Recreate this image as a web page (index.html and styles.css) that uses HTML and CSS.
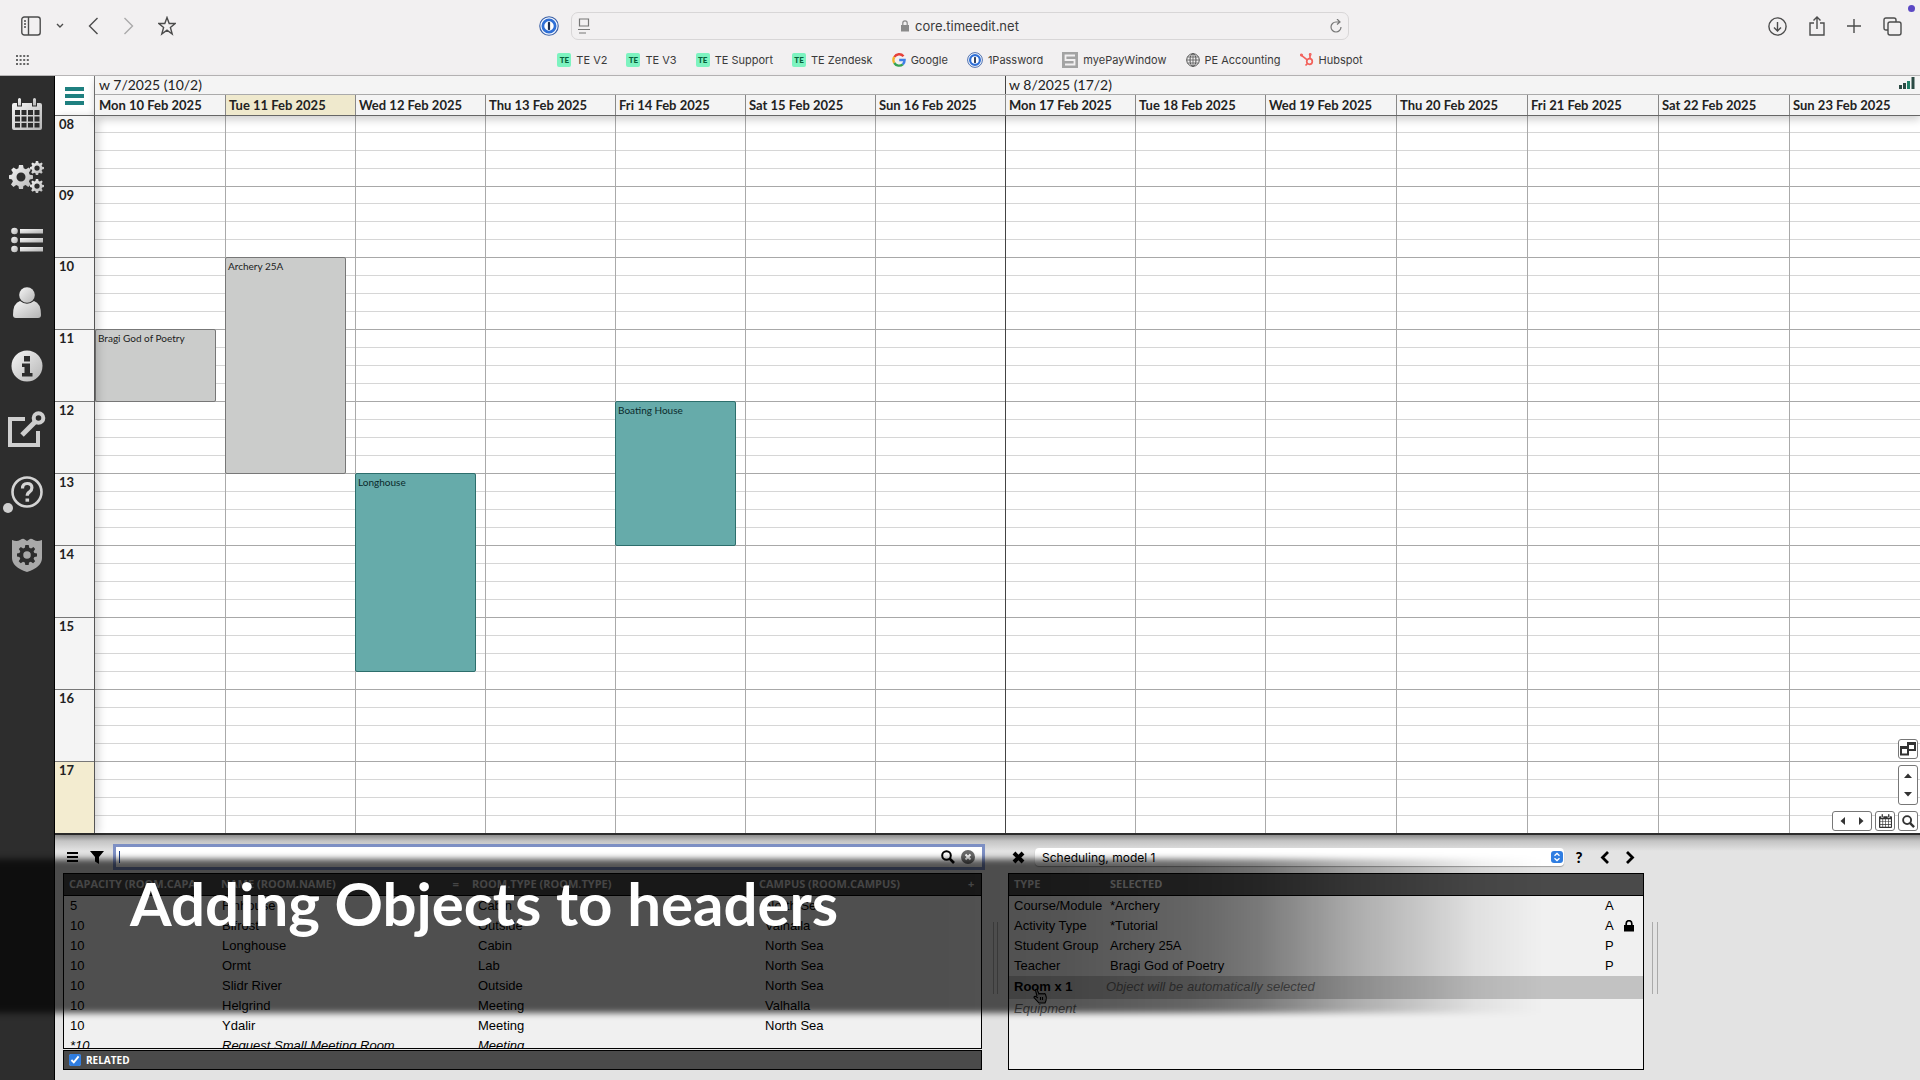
FILE: index.html
```
<!DOCTYPE html>
<html lang="en">
<head>
<meta charset="utf-8">
<title>core.timeedit.net</title>
<link rel="stylesheet" href="styles.css">
</head>
<body>
<svg class="defs" aria-hidden="true">
  <defs>
    <linearGradient id="metal" x1="0" y1="0" x2="1" y2="1">
      <stop offset="0" stop-color="#f6f6f6"/><stop offset="1" stop-color="#b4b4b4"/>
    </linearGradient>
    <symbol id="gear" viewBox="0 0 24 24">
      <path fill-rule="evenodd" d="M10 0h4l.7 3.3 2.2.9L19.800 2.400l2 2.400-1.900 2.900.9 2L24 10.200v3.600l-3.200.7-.9 2.100 1.900 2.800-2.500 2.500-2.700-1.900-2.200.9L14 24h-4l-.6-3.100-2.200-.9-2.700 1.900L2 19.400l1.900-2.800-.9-2.100L0 13.800v-3.600l3-.6.9-2L2.200 4.800l2.400-2.400 2.700 1.800 2.100-.9zM12 7.500a4.500 4.500 0 1 0 0 9 4.500 4.500 0 1 0 0-9z"/>
    </symbol>
    <symbol id="cal" viewBox="0 0 30 32">
      <path d="M0 7q0-2 2-2h3v3.500h5V5h10v3.500h5V5h3q2 0 2 2v23q0 2-2 2H2q-2 0-2-2z"/>
      <path d="M6 1.500Q6 0 7.500 0T9 1.500V7.500H6zM21 1.500Q21 0 22.500 0T24 1.500V7.500h-3z"/>
      <path class="holes" d="M3 12h5v5H3zM9.500 12h5v5h-5zM16 12h5v5h-5zM22.500 12h5v5h-5zM3 18.500h5v5H3zM9.500 18.500h5v5h-5zM16 18.500h5v5h-5zM22.500 18.500h5v5h-5zM3 25h5v4.500H3zM9.500 25h5v4.500h-5zM16 25h5v4.500h-5zM22.500 25h5v4.500h-5z"/>
    </symbol>
    <symbol id="onepass" viewBox="0 0 18 18">
      <circle cx="9" cy="9" r="8.300" fill="#f4f7fd" stroke="#3a5fa5"/>
      <circle cx="9" cy="9" r="5.500" fill="#fff" stroke="#2f6fd6" stroke-width="2.500"/>
      <rect x="8" y="5.500" width="2" height="7" rx=".6" fill="#1c2c4c"/>
    </symbol>
    <symbol id="lens" viewBox="0 0 14 14">
      <circle cx="5.500" cy="5.500" r="4.300" fill="none" stroke="currentColor" stroke-width="2"/>
      <path d="M8.500 8.500L13 13" stroke="currentColor" stroke-width="2.600"/>
    </symbol>
  </defs>
</svg>

<header class="browser">
  <div class="bar">
    <div class="bar-left">
      <button class="ic" aria-label="Sidebar"><svg width="20" height="20" viewBox="0 0 20 20"><rect x=".8" y="1" width="18.400" height="18" rx="2.500"/><path d="M7.500 1v18M3 5h2M3 8h2M3 11h2"/></svg></button>
      <button class="ic menu-caret" aria-label="Tab groups"><svg width="8" height="6" viewBox="0 0 8 6"><path d="M1 1l3 3 3-3"/></svg></button>
      <button class="ic back" aria-label="Back"><svg width="11" height="18" viewBox="0 0 11 18"><path d="M9.500 1L1.500 9l8 8"/></svg></button>
      <button class="ic forward" aria-label="Forward"><svg width="11" height="18" viewBox="0 0 11 18"><path d="M1.500 1l8 8-8 8"/></svg></button>
      <button class="ic" aria-label="Favourites"><svg width="18" height="20" viewBox="0 0 18 20"><path d="M9 1.500l2.200 6h6l-4.800 4 1.800 6.500L9 14.200 3.800 18l1.800-6.500-4.800-4h6z"/></svg></button>
    </div>
    <div class="bar-mid">
      <svg width="20" height="20"><use href="#onepass"/></svg>
      <div class="address">
        <svg class="line" width="12" height="16" viewBox="0 0 12 16"><path d="M1.500 1h9v7h-9zM0 11.500h12M1 15h7"/></svg>
        <span class="host"><svg width="8" height="12" viewBox="0 0 8 12"><path d="M0 5h8v6.500H0z" fill="#8a8a8a"/><path d="M1.800 5V3a2.200 2.200 0 0 1 4.400 0v2" fill="none" stroke="#8a8a8a" stroke-width="1.200"/></svg>core.timeedit.net</span>
        <svg class="line" width="12" height="14" viewBox="0 0 12 14"><path d="M7 0l3 3-3 2.500M9.500 3H6a5 5 0 1 0 5 5"/></svg>
      </div>
    </div>
    <div class="bar-right">
      <button class="ic" aria-label="Downloads"><svg width="19" height="19" viewBox="0 0 19 19"><circle cx="9.500" cy="9.500" r="8.600"/><path d="M9.500 5v8.500M6 10.500l3.500 3.500 3.500-3.500"/></svg></button>
      <button class="ic" aria-label="Share"><svg width="16" height="20" viewBox="0 0 16 20"><path d="M5 7H1v12h14V7h-4M8 13V1M4.500 4.500L8 1l3.500 3.500"/></svg></button>
      <button class="ic" aria-label="New tab"><svg width="14" height="14" viewBox="0 0 14 14"><path d="M7 0v14M0 7h14"/></svg></button>
      <button class="ic" aria-label="Tab overview"><svg width="19" height="19" viewBox="0 0 19 19"><rect x="5" y="5" width="13" height="13" rx="2"/><path d="M5 13H3q-2 0-2-2V3q0-2 2-2h8q2 0 2 2v2"/></svg></button>
    </div>
    <span class="rec-dot"></span>
  </div>
  <nav class="bookmarks">
    <svg class="dots" width="13" height="10" viewBox="0 0 13 10"><path d="M0 1h13M0 5h13M0 9h13" stroke="#666" stroke-width="2" stroke-dasharray="2 1.600"/></svg>
    <a href="#"><span class="te">TE</span>TE V2</a>
    <a href="#"><span class="te">TE</span>TE V3</a>
    <a href="#"><span class="te">TE</span>TE Support</a>
    <a href="#"><span class="te">TE</span>TE Zendesk</a>
    <a href="#"><svg width="14" height="14" viewBox="0 0 14 14" fill="none" stroke-width="2.400"><path d="M11.500 3.200A5.700 5.700 0 0 0 2.300 4" stroke="#e5403a"/><path d="M2.300 4a5.700 5.700 0 0 0 0 6" stroke="#f2b32c"/><path d="M2.300 10a5.700 5.700 0 0 0 8.500 1.300" stroke="#35a353"/><path d="M10.800 11.300A5.700 5.700 0 0 0 12.600 7H7.200" stroke="#3f7fe8"/></svg>Google</a>
    <a href="#"><svg width="16" height="16"><use href="#onepass"/></svg>1Password</a>
    <a href="#"><svg width="16" height="16" viewBox="0 0 16 16"><rect width="16" height="16" fill="#a3a3a3"/><path d="M13 3.500H3.500v4.500h9v4.500H3" fill="none" stroke="#f2f0f1" stroke-width="1.800"/></svg>myePayWindow</a>
    <a href="#"><svg width="14" height="14" viewBox="0 0 14 14" fill="none" stroke="#555"><circle cx="7" cy="7" r="6.300"/><ellipse cx="7" cy="7" rx="3" ry="6.300"/><path d="M7 .7v12.600M.7 7h12.600M1.500 4h11M1.500 10h11" stroke-width=".8"/></svg>PE Accounting</a>
    <a href="#"><svg width="14" height="14" viewBox="0 0 14 14" fill="none" stroke="#f2605a" stroke-width="1.700"><circle cx="9.500" cy="8.500" r="2.800"/><path d="M10 5.500V1.500M7.200 6.800L1.500 2.300M7.500 10.500L5.500 12.500"/><circle cx="1.500" cy="2" r=".7"/><circle cx="10.200" cy="1.500" r=".6"/></svg>Hubspot</a>
  </nav>
</header>

<div class="app">
  <nav class="side">
    <a href="#" aria-label="Calendar"><svg width="30" height="32" fill="url(#metal)"><use href="#cal"/></svg></a>
    <a href="#" aria-label="Settings"><svg width="36" height="32" viewBox="0 0 36 32" fill="url(#metal)"><use href="#gear" x="0" y="4" width="24" height="24"/><use href="#gear" x="21" y="0" width="14" height="14"/><use href="#gear" x="21" y="18" width="14" height="14"/></svg></a>
    <a href="#" aria-label="List"><svg width="32" height="26" viewBox="0 0 32 26" fill="url(#metal)"><circle cx="3.500" cy="4" r="3.300"/><circle cx="3.500" cy="13" r="3.300"/><circle cx="3.500" cy="22" r="3.300"/><rect x="9" y="2" width="23" height="4.500"/><rect x="9" y="11" width="23" height="4.500"/><rect x="9" y="20" width="23" height="4.500"/></svg></a>
    <a href="#" aria-label="User"><svg width="30" height="32" viewBox="0 0 30 32" fill="url(#metal)"><circle cx="15" cy="8" r="7.800"/><path d="M8 14q7 5.500 14 0 7 2 7 14 0 3-3 3H4q-3 0-3-3 0-12 7-14z"/></svg></a>
    <a href="#" aria-label="Information"><svg width="32" height="32" viewBox="0 0 32 32"><circle cx="16" cy="16" r="15.500" fill="url(#metal)"/><path d="M13 6h6v5.500h-6zM11 13.500h8V23h2.500v3.500H11V23h2.500v-6H11z" fill="#2d2d2d"/></svg></a>
    <a href="#" aria-label="Open"><svg width="38" height="36" viewBox="0 0 38 36" fill="none" stroke="#cfcfcf"><path d="M17 8H2v26h28V20" stroke-width="4"/><path d="M14 24L28 10" stroke-width="5"/><circle cx="30.500" cy="7" r="4.800" stroke-width="4"/></svg></a>
    <a href="#" aria-label="Help" class="help"><svg width="32" height="32" viewBox="0 0 32 32" fill="none" stroke="#d4d4d4"><circle cx="16" cy="16" r="14.500" stroke-width="2.600"/><path d="M11.500 12.500q0-5 4.700-5t4.700 4.300q0 2.500-2.300 4-2.400 1.500-2.400 4" stroke-width="3.200"/><path d="M14.500 22.500h3.600v3.200h-3.600z" fill="#d4d4d4" stroke="none"/></svg></a>
    <a href="#" aria-label="Admin"><svg width="30" height="34" viewBox="0 0 30 34"><path d="M0 2q5 2 8 0 3-2 4-1l3 2 3-2q1-1 4 1 3 2 8 0v18q0 9-15 14Q0 29 0 20z" fill="#a9a9a9"/><use href="#gear" x="5" y="7" width="20" height="20" fill="#2d2d2d"/></svg></a>
  </nav>

  <div class="work">
    <section class="calendar">
      <button class="menu" aria-label="Menu"><i></i><i></i><i></i></button>
      <div class="heads">
        <div class="weeks"><span>w 7/2025 (10/2)</span><span>w 8/2025 (17/2)</span>
          <svg class="stats" width="16" height="12" viewBox="0 0 16 12"><path d="M0 8h3v4H0zM4 6h3v6H4zM12.500 0h3v12h-3z" fill="#2b4a44"/><path d="M8 4h3v8H8z" fill="#1f8068"/></svg>
        </div>
        <div class="days">
          <span>Mon 10 Feb 2025</span><span class="today">Tue 11 Feb 2025</span><span>Wed 12 Feb 2025</span><span>Thu 13 Feb 2025</span><span>Fri 14 Feb 2025</span><span>Sat 15 Feb 2025</span><span>Sun 16 Feb 2025</span><span class="monday">Mon 17 Feb 2025</span><span>Tue 18 Feb 2025</span><span>Wed 19 Feb 2025</span><span>Thu 20 Feb 2025</span><span>Fri 21 Feb 2025</span><span>Sat 22 Feb 2025</span><span>Sun 23 Feb 2025</span>
        </div>
      </div>
      <div class="hours">
        <span>08</span><span>09</span><span>10</span><span>11</span><span>12</span><span>13</span><span>14</span><span>15</span><span>16</span><span class="now">17</span>
      </div>
      <div class="field">
        <div class="lines"><i></i><i></i><i></i><i></i><i></i><i></i><i></i><i></i><i></i><i></i></div>
        <div class="cols"><i></i><i></i><i></i><i></i><i></i><i></i><i></i><i class="monday"></i><i></i><i></i><i></i><i></i><i></i><i></i></div>
        <div class="events">
          <div class="event bragi">Bragi God of Poetry</div>
          <div class="event archery">Archery 25A</div>
          <div class="event room longhouse">Longhouse</div>
          <div class="event room boating">Boating House</div>
        </div>
        <div class="controls">
          <button aria-label="Windows"><svg width="16" height="14" viewBox="0 0 16 14" fill="none" stroke="#333" stroke-width="2"><path d="M8 1h7v7H8z"/><path d="M1 5h7v7.500H1z" fill="#fff"/><path d="M1 6h7M8 2h7"/></svg></button>
          <button class="tall" aria-label="Up and down"><svg width="8" height="24" viewBox="0 0 8 24" fill="#333"><path d="M0 5l4-4.500L8 5zM0 19l4 4.500L8 19z"/></svg></button>
          <div class="controls-row">
            <button class="wide" aria-label="Left and right"><svg width="24" height="8" viewBox="0 0 24 8" fill="#333"><path d="M5 0L.5 4 5 8zM19 0l4.500 4L19 8z"/></svg></button>
            <button class="dark-cal" aria-label="Pick a date"><svg width="13" height="14" fill="#333"><use href="#cal"/></svg></button>
            <button aria-label="Zoom"><svg width="13" height="13"><use href="#lens"/></svg></button>
          </div>
        </div>
      </div>
    </section>

    <section class="panels">
      <div class="panel">
        <div class="tools">
          <button class="plain" aria-label="List menu"><svg width="11" height="10" viewBox="0 0 11 10"><path d="M0 1h11M0 5h11M0 9h11" stroke="#000" stroke-width="2"/></svg></button>
          <button class="plain filter" aria-label="Filter"><svg width="14" height="13" viewBox="0 0 14 13"><path d="M0 0h14L9 6v7l-4-2.500V6z"/></svg></button>
          <div class="search">
            <input type="text" aria-label="Search">
            <span class="caret"></span>
            <svg width="14" height="14"><use href="#lens"/></svg>
            <svg width="14" height="14" viewBox="0 0 14 14"><circle cx="7" cy="7" r="7" fill="#6a6a6a"/><path d="M4.500 4.500l5 5M9.500 4.500l-5 5" stroke="#fff" stroke-width="2"/></svg>
          </div>
        </div>
        <div class="box rooms">
          <table>
            <colgroup><col class="c-cap"><col class="c-name"><col class="c-type"><col><col class="c-plus"></colgroup>
            <thead><tr><th>CAPACITY (ROOM.CAPA</th><th>NAME (ROOM.NAME)<b class="sort">=</b></th><th>ROOM.TYPE (ROOM.TYPE)</th><th>CAMPUS (ROOM.CAMPUS)</th><th>+</th></tr></thead>
            <tbody>
              <tr><td>5</td><td>Finhouse</td><td>Cabin</td><td colspan="2">North Sea</td></tr>
              <tr><td>10</td><td>Bifrost</td><td>Outside</td><td colspan="2">Valhalla</td></tr>
              <tr><td>10</td><td>Longhouse</td><td>Cabin</td><td colspan="2">North Sea</td></tr>
              <tr><td>10</td><td>Ormt</td><td>Lab</td><td colspan="2">North Sea</td></tr>
              <tr><td>10</td><td>Slidr River</td><td>Outside</td><td colspan="2">North Sea</td></tr>
              <tr><td>10</td><td>Helgrind</td><td>Meeting</td><td colspan="2">Valhalla</td></tr>
              <tr><td>10</td><td>Ydalir</td><td>Meeting</td><td colspan="2">North Sea</td></tr>
              <tr class="virtual"><td>*10</td><td>Request Small Meeting Room</td><td>Meeting</td><td colspan="2"></td></tr>
            </tbody>
          </table>
        </div>
        <label class="related"><input type="checkbox" checked>RELATED</label>
      </div>
      <div class="grip"></div>
      <div class="panel">
        <div class="tools">
          <button class="plain" aria-label="Close"><svg width="13" height="13" viewBox="0 0 13 13"><path d="M2 2l9 9M11 2l-9 9" stroke="#000" stroke-width="4"/></svg></button>
          <div class="pick">
            <select aria-label="Model"><option>Scheduling, model 1</option></select>
            <svg width="12" height="12" viewBox="0 0 12 12"><rect width="12" height="12" rx="3" fill="#2f7de1"/><path d="M3.500 4.800L6 2.500l2.500 2.300M3.500 7.200L6 9.500l2.500-2.300" fill="none" stroke="#fff" stroke-width="1.300"/></svg>
          </div>
          <button class="plain ask" aria-label="Help">?</button>
          <button class="plain" aria-label="Previous"><svg width="9" height="13" viewBox="0 0 9 13"><path d="M8 1L2.500 6.500 8 12" fill="none" stroke="#000" stroke-width="2.800"/></svg></button>
          <button class="plain next" aria-label="Next"><svg width="9" height="13" viewBox="0 0 9 13"><path d="M1 1l5.500 5.500L1 12" fill="none" stroke="#000" stroke-width="2.800"/></svg></button>
        </div>
        <div class="box picked">
          <table>
            <colgroup><col class="p-type"><col><col class="p-mode"><col class="p-lock"></colgroup>
            <thead><tr><th>TYPE</th><th>SELECTED</th><th></th><th></th></tr></thead>
            <tbody>
              <tr><td>Course/Module</td><td>*Archery</td><td>A</td><td></td></tr>
              <tr><td>Activity Type</td><td>*Tutorial</td><td>A</td><td><svg width="10" height="12" viewBox="0 0 10 12"><path d="M0 5h10v6.500H0z"/><path d="M2.200 5.500V3.500a2.800 2.800 0 0 1 5.600 0v2" fill="none" stroke="#000" stroke-width="1.700"/></svg></td></tr>
              <tr><td>Student Group</td><td>Archery 25A</td><td>P</td><td></td></tr>
              <tr><td>Teacher</td><td>Bragi God of Poetry</td><td>P</td><td></td></tr>
              <tr class="current"><td><b>Room x 1</b><svg class="hand" width="15" height="16" viewBox="0 0 15 16"><path d="M4 8L2.500 2.500q0-1.500 1.500-1L6 6q1-1 2 0 1-1 2 0 1.500-1 2.500.5 1.500 3 .5 6L12 15H6L1 9.500q0-1.500 2-1l2 1.500M7.500 9v3M9.500 9v3" fill="#aaa" stroke="#000" stroke-width="1.100"/></svg></td><td class="auto">Object will be automatically selected</td><td></td><td></td></tr>
              <tr class="unused"><td>Equipment</td><td></td><td></td><td></td></tr>
            </tbody>
          </table>
        </div>
      </div>
      <div class="grip grip-end"></div>
    </section>
  </div>

  <div class="caption"><div class="caption-shade"></div><h1>Adding Objects to headers</h1></div>
</div>
</body>
</html>
```

FILE: styles.css
```
* { box-sizing: border-box; }
body {
  margin: 0;
  min-height: 100vh;
  display: flex;
  flex-direction: column;
  font-family: Lato, "Noto Sans", sans-serif;
  color: #222;
  background: #e3e3e3;
  overflow: hidden;
}
button { border: 0; padding: 0; margin: 0; background: none; display: flex; align-items: center; justify-content: center; }
a { color: inherit; text-decoration: none; }
.defs { position: absolute; width: 0; height: 0; }
.holes { fill: var(--hole); }

/* browser chrome */
.browser { background: #f2f0f1; border-bottom: 1px solid #b8b6b7; padding-bottom: 1px; font-family: Inter, sans-serif; color: #3a3a3a; }
.bar { position: relative; display: grid; grid-template-columns: 539fr 810fr 571fr; align-items: center; height: 45px; padding-top: 7px; }
.bar-left { display: flex; align-items: center; padding-left: 21px; }
.bar-right { display: flex; align-items: center; justify-content: flex-end; gap: 22px; padding-right: 18px; }
.ic svg { display: block; fill: none; stroke: #4c4c4c; stroke-width: 1.400; }
.menu-caret { margin: 0 24px 0 15px; }
.forward { margin: 0 24px 0 24px; }
.forward svg { stroke: #aaa; }
.bar-mid { display: flex; align-items: center; gap: 12px; }
.address { flex: 1; display: flex; align-items: center; justify-content: space-between; height: 28px; padding: 0 6px; border: 1px solid #d8d6d7; border-radius: 7px; font-size: 13px; }
.line { fill: none; stroke: #777; stroke-width: 1.200; }
.host { display: flex; align-items: center; gap: 6px; }
.rec-dot { position: absolute; top: 5px; right: 5px; width: 7px; height: 7px; border-radius: 50%; background: #5b48c4; }
.bookmarks { position: relative; display: flex; justify-content: center; align-items: center; gap: 19px; height: 29px; font-size: 11px; }
.bookmarks a { display: flex; align-items: center; gap: 5px; }
.bookmarks .dots { position: absolute; left: 16px; }
.te { width: 14px; height: 14px; background: #7df3c0; color: #05603a; font: 900 8px/14px Lato, sans-serif; text-align: center; border-radius: 2px; }

/* application frame */
.app { position: relative; flex: 1; display: flex; }
.side { width: 55px; background: #2d2d2d; border-right: 1px solid #000; padding-top: 6px; display: flex; flex-direction: column; --hole: #2d2d2d; }
.side a { position: relative; display: flex; align-items: center; justify-content: center; height: 63px; }
.help::after { content: ""; position: absolute; left: 3px; bottom: 10px; width: 10px; height: 10px; border-radius: 50%; background: #cfcfcf; }
.work { flex: 1; min-width: 0; display: flex; flex-direction: column; }

/* calendar */
.calendar { display: grid; grid-template: auto auto / 40px 1fr; background: #fff; border-bottom: 2px solid #2c2c2c; }
.menu { flex-direction: column; gap: 3px; background: #fff; border-bottom: 1px solid #666; border-right: 1px solid #777; }
.menu i { width: 19px; height: 4px; background: #1f8080; }
.heads { position: relative; z-index: 2; background: #f4f4f4; box-shadow: 0 4px 8px rgba(0,0,0,.18); border-bottom: 1px solid #666; }
.weeks { position: relative; display: grid; grid-template-columns: 910fr 915fr; height: 18px; font-size: 14px; line-height: 18px; }
.weeks span { padding-left: 4px; }
.weeks span + span { border-left: 1px solid #444; padding-left: 3px; }
.stats { position: absolute; right: 5px; top: 1px; }
.days, .cols, .events { display: grid; grid-template-columns: repeat(9, minmax(0, 130fr)) repeat(5, minmax(0, 131fr)); }
.days { height: 21px; border-top: 1px solid #aaa; font-size: 13px; font-weight: 700; line-height: 21px; }
.days span { border-left: 1px solid #888; padding-left: 3px; white-space: nowrap; overflow: hidden; }
.days span:first-child { border-left: 0; padding-left: 4px; }
.days .today { background: #efe9cd; }
.hours { border-right: 1px solid #555; background: #f4f4f4; position: relative; z-index: 1; box-shadow: 4px 0 8px rgba(0,0,0,.15); }
.hours span { display: block; height: 72px; padding: 0 4px; border-top: 1px solid #777; font-size: 13px; font-weight: 700; line-height: 16px; }
.hours span:nth-child(2), .lines i:nth-child(2) { height: 71px; }
.hours span:first-child, .lines i:first-child { height: 70px; border-top: 0; }
.hours .now { background: #f3ecd0; }
.field { position: relative; display: grid; }
.lines, .cols, .events { grid-area: 1 / 1; }
.lines i { display: block; height: 72px; border-top: 1px solid #a8a8a8; background: repeating-linear-gradient(to top, transparent 0 17px, #d6d6d6 17px 18px); }
.cols i { border-left: 1px solid #aaa; }
.cols i:first-child { border-left: 0; }
.cols .monday { border-color: #444; }
.events { grid-template-rows: 16px repeat(3, 18px) 17px repeat(35, 18px); }
.event { margin: 0 9px -1px 0; padding: 2px; border: 1px solid #777; border-radius: 2px; background: #cbcccb; font-size: 10px; line-height: 12px; color: #1c1c1c; }
.room { background: #66abaa; border-color: #2d6e6c; color: #0a2a2a; }
.bragi { grid-area: 13 / 1 / 17 / 2; }
.archery { grid-area: 9 / 2 / 21 / 3; }
.longhouse { grid-area: 21 / 3 / 32 / 4; }
.boating { grid-area: 17 / 5 / 25 / 6; }
.controls { position: absolute; right: 2px; bottom: 2px; display: flex; flex-direction: column; align-items: flex-end; gap: 6px; --hole: #fff; }
.controls button { width: 20px; height: 20px; background: #fff; border: 1px solid #777; border-radius: 3px; color: #333; }
.controls .tall { height: 40px; }
.controls .wide { width: 40px; }
.controls-row { display: flex; gap: 3px; }

/* bottom panels */
.panels { flex: 1; display: grid; grid-template-columns: minmax(0, 919fr) 26px minmax(0, 636fr) minmax(0, 276fr); align-items: start; padding: 10px 0 10px 8px; background: linear-gradient(#8c8c8c, #c4c4c4 6px, #e3e3e3 16px); color: #000; }
.tools { display: flex; align-items: center; height: 24px; margin-bottom: 4px; padding-left: 4px; }
.search { position: relative; flex: 1; display: flex; align-items: center; gap: 6px; height: 20px; padding-right: 7px; background: #fff; box-shadow: 0 0 0 3px #7d8fc4; }
.search input { flex: 1; min-width: 0; height: 18px; border: 0; outline: 0; background: none; font: 13px "Liberation Sans", sans-serif; }
.caret { position: absolute; left: 3px; top: 4px; width: 1px; height: 12px; background: #1c3f8c; }
.rooms { height: 176px; overflow: hidden; }
.tools .plain + .plain { margin-left: 13px; }
.tools .plain + .filter { margin-left: 12px; }
.tools .plain + .next { margin: 0 9px 0 17px; }
.plain + .search { margin-left: 12px; }
.box { border: 1px solid #000; background: #f0f0f0; }
table { width: 100%; table-layout: fixed; border-collapse: collapse; font: 13px/20px "Liberation Sans", sans-serif; }
th { position: relative; height: 21px; padding: 0 0 0 5px; text-align: left; background: #4a4a4a; color: #d0d0d0; font: 700 11px/20px "Open Sans", sans-serif; border-bottom: 1px solid #000; white-space: nowrap; overflow: hidden; }
th .sort { position: absolute; right: 13px; }
td { height: 20px; padding: 0 0 0 5px; white-space: nowrap; }
.c-cap { width: 152px; }
.c-name { width: 256px; }
.c-type { width: 287px; }
.c-plus { width: 18px; }
.rooms th:nth-child(3), .rooms th:nth-child(4) { padding-left: 0; }
.rooms td { padding-left: 6px; }
.virtual { font-style: italic; }
.related { display: flex; align-items: center; gap: 5px; height: 20px; margin-top: 1px; padding-left: 5px; border: 1px solid #000; background: #4a4a4a; color: #fff; font: 700 10px "Open Sans", sans-serif; }
.related input { width: 12px; height: 12px; margin: 0; accent-color: #2f7de1; }
.grip { align-self: center; justify-self: center; width: 5px; height: 72px; border: solid #aaa; border-width: 0 1px; }
.grip-end { justify-self: start; margin-left: 8px; width: 6px; }
.pick { position: relative; flex: 1; margin: 0 10px 0 10px; display: flex; align-items: center; }
.pick select { width: 100%; height: 18px; padding: 0 7px; border: 0; border-radius: 4px; background: #fff; appearance: none; font: 12px Inter, sans-serif; color: #000; box-shadow: 0 1px 1px rgba(0,0,0,.3); }
.pick svg { position: absolute; right: 1px; }
.ask { width: 10px; margin-right: 3px; font: 900 15px Lato, sans-serif; color: #000; }
.picked { height: 197px; }
.p-type { width: 96px; }
.p-mode { width: 19px; }
.p-lock { width: 24px; }
.picked td svg { display: block; }
.current { background: #c2c2c2; }
.current td { position: relative; height: 23px; }
.picked .auto { padding-left: 1px; }
.auto, .unused { font-style: italic; color: #666; }
.hand { position: absolute; left: 24px; top: 12px; }

/* lower-third title */
.caption { position: absolute; left: 0; right: 0; bottom: 67px; height: 154px; pointer-events: none; }
.caption-shade { position: absolute; inset: 0 18% 0 -20px; background: linear-gradient(90deg, rgba(0,0,0,.67) 60%, rgba(0,0,0,.65) 68%, rgba(0,0,0,.58) 76%, rgba(0,0,0,.5) 80%, rgba(0,0,0,.4) 83%, rgba(0,0,0,.29) 86%, rgba(0,0,0,.15) 91%, rgba(0,0,0,.06) 94%, transparent 98%); filter: blur(3px); }
.caption h1 { position: relative; margin: 0; padding: 8px 0 0 130px; color: #fff; font: 700 60px/72px Lato, sans-serif; }
```
